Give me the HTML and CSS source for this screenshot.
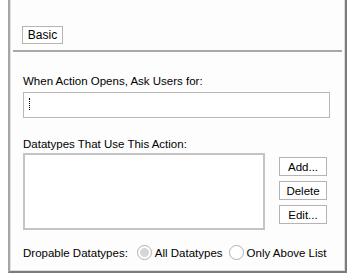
FILE: index.html
```html
<!DOCTYPE html>
<html lang="en">
<head>
    <meta charset="UTF-8">
    <title>Action Properties</title>
    <link rel="stylesheet" href="styles.css">
</head>
<body>

<div class="panel">
    <div class="top-bar">
        <button class="btn basic-btn">Basic</button>
    </div>
    <hr class="separator">

    <div class="content">
        <label class="field-label" for="askUsers">When Action Opens, Ask Users for:</label>
        <div class="text-box" id="askUsers"><span class="caret"></span></div>

        <label class="field-label list-label">Datatypes That Use This Action:</label>
        <div class="list-row">
            <div class="list-box"></div>
            <div class="list-buttons">
                <button class="btn side-btn">Add...</button>
                <button class="btn side-btn">Delete</button>
                <button class="btn side-btn">Edit...</button>
            </div>
        </div>

        <div class="drop-row">
            <span class="drop-label">Dropable Datatypes:</span>
            <label class="radio-option"><span class="radio checked"></span>All Datatypes</label>
            <label class="radio-option"><span class="radio"></span>Only Above List</label>
        </div>
    </div>
</div>

</body>
</html>
```

FILE: styles.css
```css
* {
    margin: 0;
    padding: 0;
    box-sizing: border-box;
}

body {
    font-family: 'Liberation Sans', Arial, sans-serif;
    font-size: 11.5px;
    color: #000;
    background-color: #fff;
}

.panel {
    margin-left: 8px;
    width: 339px;
    height: 273px;
    background-color: #fdfdfd;
    border-left: 2px solid #a6a6a6;
    border-right: 2px solid #7c7c7c;
    border-bottom: 2px solid #7c7c7c;
    box-shadow: inset 1px 0 0 #e2e2e2, inset -1px 0 0 #dcdcdc, inset 0 -1px 0 #dcdcdc;
}

.top-bar {
    padding: 26px 0 0 12px;
    height: 50px;
}

.btn {
    font-family: 'Liberation Sans', Arial, sans-serif;
    font-size: 11.5px;
    background-color: #fff;
    border: 1px solid #b4b4b4;
    color: #000;
    height: 18px;
    line-height: 16px;
}

.basic-btn {
    width: 41px;
    font-size: 12px;
}

.separator {
    border: none;
    border-top: 2px solid #a8a8a8;
    margin: 0 3px;
}

.content {
    padding: 22px 0 0 13px;
}

.field-label {
    display: block;
    height: 15px;
    line-height: 15px;
}

.text-box {
    margin-top: 3px;
    width: 307px;
    height: 26px;
    border: 1px solid #b8b8b8;
    background-color: #fff;
    padding: 5px 0 0 4px;
}

.caret {
    display: block;
    width: 3px;
    height: 12px;
    border-left: 1px dotted #000;
    margin-left: 1px;
}

.list-label {
    margin-top: 19px;
}

.list-row {
    display: flex;
    margin-top: 1px;
}

.list-box {
    width: 242px;
    height: 77px;
    border: 2px solid #c4c4c4;
    background-color: #fff;
}

.list-buttons {
    display: flex;
    flex-direction: column;
    gap: 5px;
    margin: 4px 0 0 14px;
}

.side-btn {
    width: 48px;
    height: 19px;
}

.drop-row {
    display: flex;
    align-items: center;
    margin-top: 15px;
}

.drop-label {
    margin-right: 9px;
}

.radio-option {
    display: flex;
    align-items: center;
    margin-right: 6px;
}

.radio {
    width: 15px;
    height: 15px;
    border-radius: 50%;
    border: 1px solid #b0b0b0;
    background-color: #fff;
    margin-right: 3px;
}

.radio.checked {
    background: radial-gradient(circle, #d6d6d6 0, #d6d6d6 4px, #fff 5px);
}
```
